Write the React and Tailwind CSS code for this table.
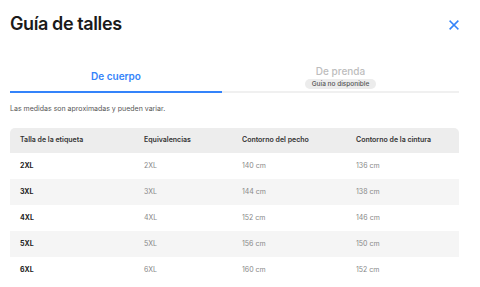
import React from "react";

const rows = [
  { talla: "2XL", eq: "2XL", pecho: "140 cm", cintura: "136 cm" },
  { talla: "3XL", eq: "3XL", pecho: "144 cm", cintura: "138 cm" },
  { talla: "4XL", eq: "4XL", pecho: "152 cm", cintura: "146 cm" },
  { talla: "5XL", eq: "5XL", pecho: "156 cm", cintura: "150 cm" },
  { talla: "6XL", eq: "6XL", pecho: "160 cm", cintura: "152 cm" },
];

export default function App() {
  return (
    <div className="h-[287px] w-[480px] overflow-hidden bg-white px-[10px] pt-[13px] font-['Inter',sans-serif] text-[#1a1a1a]">
      <div className="flex items-center justify-between pr-[11px]">
        <h1 className="text-[18px] font-semibold leading-[22px] tracking-[-0.4px]">Guía de talles</h1>
        <svg width="10" height="10" viewBox="0 0 10 10" className="mt-[2px]">
          <path d="M1.2 1.2 L8.8 8.8 M8.8 1.2 L1.2 8.8" stroke="#3483fa" strokeWidth="1.6" strokeLinecap="square" />
        </svg>
      </div>

      <div className="mt-[29px] flex w-[449px] border-b-[2px] border-[#f0f0f0]">
        <div className="-mb-[2px] flex w-[212px] flex-col items-center border-b-[2px] border-[#3483fa] pb-[8px] pt-[5px]">
          <span className="text-[10px] font-semibold leading-[14px] text-[#3483fa]">De cuerpo</span>
        </div>
        <div className="flex flex-1 flex-col items-center pb-[2px]">
          <span className="text-[10px] font-medium leading-[14px] text-[#bdbdbd]">De prenda</span>
          <span className="mt-[1px] rounded-full bg-[#ececec] px-[7px] text-[6.5px] font-medium leading-[10px] text-[#555]">Guía no disponible</span>
        </div>
      </div>

      <p className="mt-[11px] text-[7px] leading-[10px] text-[#555]">Las medidas son aproximadas y pueden variar.</p>

      <div className="mt-[14px] w-[449px] overflow-hidden rounded-t-[5px]">
        <div className="grid h-[25px] grid-cols-[124px_98px_114px_1fr] items-center bg-[#ededed] pl-[10px] text-[7px] font-semibold text-[#333]">
          <span>Talla de la etiqueta</span>
          <span>Equivalencias</span>
          <span>Contorno del pecho</span>
          <span>Contorno de la cintura</span>
        </div>
        {rows.map((r, i) => (
          <div
            key={r.talla}
            className={
              "grid h-[26px] grid-cols-[124px_98px_114px_1fr] items-center pl-[10px] text-[7px] " +
              (i % 2 === 1 ? "bg-[#f5f5f5]" : "bg-white")
            }
          >
            <span className="font-bold text-[#222]">{r.talla}</span>
            <span className="text-[#888]">{r.eq}</span>
            <span className="text-[#888]">{r.pecho}</span>
            <span className="text-[#888]">{r.cintura}</span>
          </div>
        ))}
      </div>
    </div>
  );
}
